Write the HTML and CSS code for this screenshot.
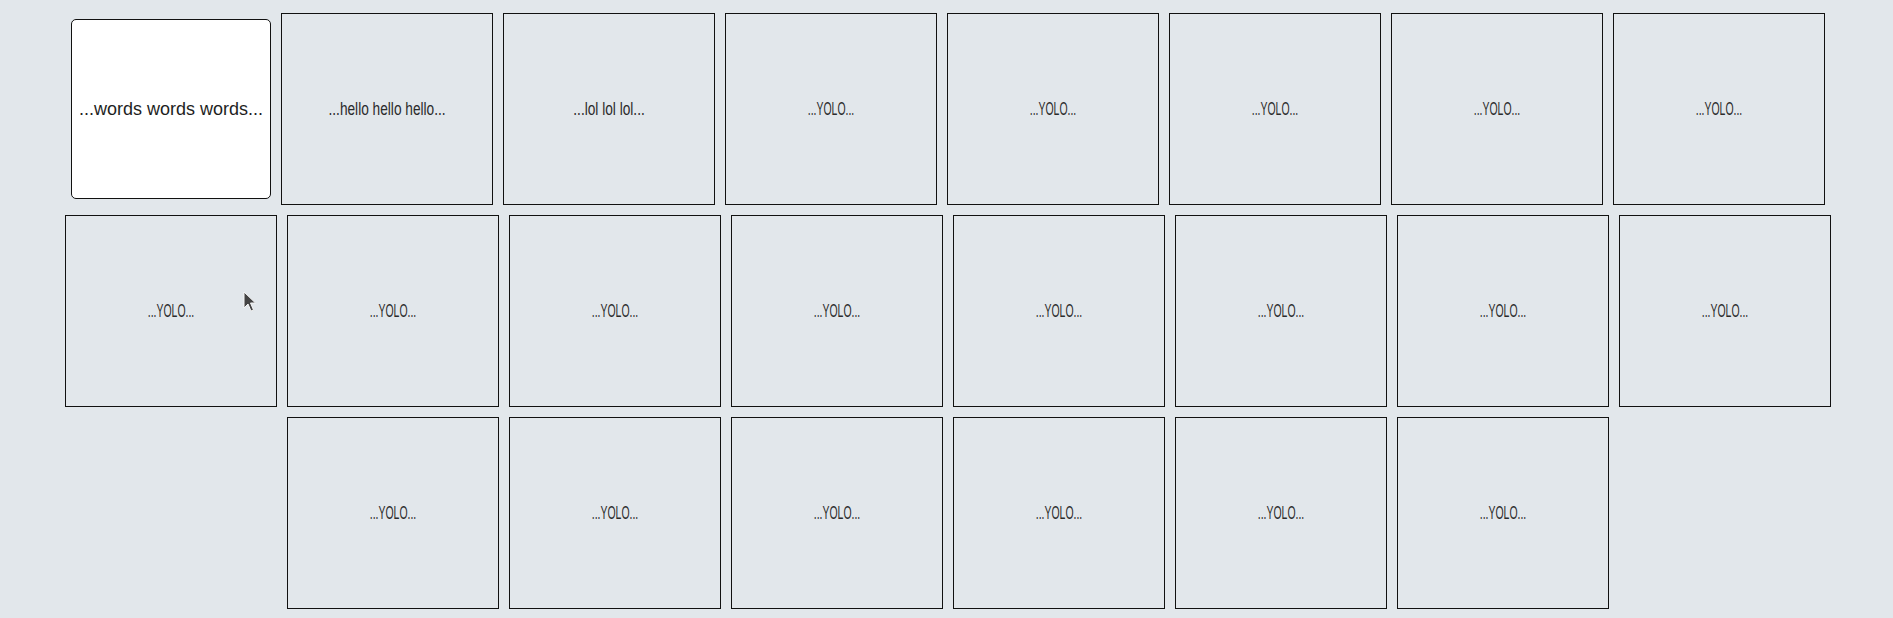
FILE: index.html
```html
<!DOCTYPE html>
<html>
<head>
<meta charset="utf-8">
<link rel="stylesheet" href="styles.css">
</head>
<body>
<div class="board">
  <div class="row row-first">
    <div class="card card-active">...words words words...</div>
    <div class="card"><span class="label label-lower">...hello hello hello...</span></div>
    <div class="card"><span class="label label-lower">...lol lol lol...</span></div>
    <div class="card"><span class="label">...YOLO...</span></div>
    <div class="card"><span class="label">...YOLO...</span></div>
    <div class="card"><span class="label">...YOLO...</span></div>
    <div class="card"><span class="label">...YOLO...</span></div>
    <div class="card"><span class="label">...YOLO...</span></div>
  </div>
  <div class="row">
    <div class="card"><span class="label">...YOLO...</span></div>
    <div class="card"><span class="label">...YOLO...</span></div>
    <div class="card"><span class="label">...YOLO...</span></div>
    <div class="card"><span class="label">...YOLO...</span></div>
    <div class="card"><span class="label">...YOLO...</span></div>
    <div class="card"><span class="label">...YOLO...</span></div>
    <div class="card"><span class="label">...YOLO...</span></div>
    <div class="card"><span class="label">...YOLO...</span></div>
  </div>
  <div class="row row-last">
    <div class="card"><span class="label">...YOLO...</span></div>
    <div class="card"><span class="label">...YOLO...</span></div>
    <div class="card"><span class="label">...YOLO...</span></div>
    <div class="card"><span class="label">...YOLO...</span></div>
    <div class="card"><span class="label">...YOLO...</span></div>
    <div class="card"><span class="label">...YOLO...</span></div>
  </div>
</div>
<svg class="cursor" width="14" height="22" viewBox="0 0 14 22">
  <path d="M1 1 L1 17 L5 13 L8 20 L10.5 19 L7.5 12 L12.5 12 Z" fill="#444" stroke="#f4f4f4" stroke-width="1" stroke-linejoin="round"/>
</svg>
</body>
</html>
```
FILE: styles.css
```css
html, body {
  margin: 0;
  padding: 0;
  background: #e2e7eb;
  height: 100%;
  overflow: hidden;
}
.board {
  display: flex;
  flex-direction: column;
  gap: 10px;
  padding: 13px 0 0 65px;
}
.row {
  display: flex;
  gap: 10px;
  align-items: flex-start;
}
.row-first {
  padding-left: 6px;
}
.row-last {
  padding-left: 222px;
}
.card {
  box-sizing: border-box;
  width: 212px;
  height: 192px;
  flex: none;
  border: 1px solid #111;
  display: flex;
  align-items: center;
  justify-content: center;
  font-family: "Liberation Sans", Arial, sans-serif;
  font-size: 18px;
  color: #2b2b2b;
}
.label {
  display: inline-block;
  white-space: nowrap;
  transform: scaleX(0.58);
}
.label-lower {
  transform: scaleX(0.76);
}
.card-active {
  width: 200px;
  height: 180px;
  margin-top: 6px;
  background: #fff;
  border-radius: 5px;
  font-size: 18px;
  color: #1e1e1e;
}
.cursor {
  position: absolute;
  left: 243px;
  top: 291px;
}
```
